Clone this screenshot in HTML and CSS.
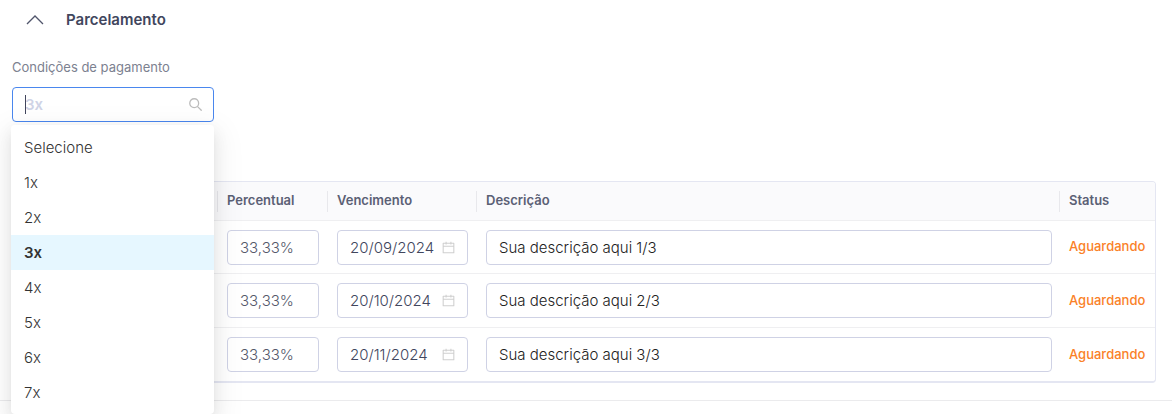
FILE: index.html
```html
<!DOCTYPE html>
<html lang="pt-BR">
<head>
<meta charset="utf-8">
<meta name="viewport" content="width=device-width, initial-scale=1">
<title>Parcelamento</title>
<link rel="stylesheet" href="styles.css">
</head>
<body>
<svg class="sprite" aria-hidden="true">
  <symbol id="calendar" viewBox="0 0 1024 1024">
    <path d="M880 184H712v-64c0-4.400-3.600-8-8-8h-56c-4.400 0-8 3.600-8 8v64H384v-64c0-4.400-3.600-8-8-8h-56c-4.400 0-8 3.600-8 8v64H144c-17.700 0-32 14.300-32 32v664c0 17.700 14.300 32 32 32h736c17.700 0 32-14.300 32-32V216c0-17.700-14.300-32-32-32zm-40 656H184V460h656v380zM184 392V256h128v48c0 4.400 3.600 8 8 8h56c4.400 0 8-3.600 8-8v-48h256v48c0 4.400 3.600 8 8 8h56c4.400 0 8-3.600 8-8v-48h128v136H184z"/>
  </symbol>
</svg>
<section class="panel">
  <h2 class="panel-header">
    <button class="panel-toggle" type="button" aria-expanded="true">
      <svg class="chevron" viewBox="0 0 18 10" aria-hidden="true"><path d="M1 9 9 1l8 8"/></svg>
      Parcelamento
    </button>
  </h2>
  <div class="panel-body">
    <div class="field">
      <label class="field-label" for="condition">Condições de pagamento</label>
      <div class="select">
        <input class="select-input" id="condition" type="text" role="combobox" aria-expanded="true" aria-controls="options" placeholder="3x" autocomplete="off">
        <span class="caret"></span>
        <svg class="search" viewBox="0 0 12 12" aria-hidden="true"><circle cx="4.800" cy="4.800" r="4.100"/><path d="m7.700 7.700 4 4"/></svg>
        <ul class="menu" id="options" role="listbox">
          <li class="option" role="option">Selecione</li>
          <li class="option" role="option">1x</li>
          <li class="option" role="option">2x</li>
          <li class="option selected" role="option" aria-selected="true">3x</li>
          <li class="option" role="option">4x</li>
          <li class="option" role="option">5x</li>
          <li class="option" role="option">6x</li>
          <li class="option" role="option">7x</li>
        </ul>
      </div>
    </div>
    <div class="table-frame">
      <table class="table">
        <colgroup><col class="col-first"><col class="col-percent"><col class="col-date"><col><col class="col-status"></colgroup>
        <thead>
          <tr><th></th><th>Percentual</th><th>Vencimento</th><th>Descrição</th><th>Status</th></tr>
        </thead>
        <tbody>
          <tr>
            <td></td>
            <td><input class="input muted" type="text" value="33,33%" aria-label="Percentual"></td>
            <td><div class="date"><input class="input" type="text" value="20/09/2024" aria-label="Vencimento"><svg class="calendar" aria-hidden="true"><use href="#calendar"/></svg></div></td>
            <td class="description"><input class="input dark" type="text" value="Sua descrição aqui 1/3" aria-label="Descrição"></td>
            <td class="status">Aguardando</td>
          </tr>
          <tr>
            <td></td>
            <td><input class="input muted" type="text" value="33,33%" aria-label="Percentual"></td>
            <td><div class="date"><input class="input" type="text" value="20/10/2024" aria-label="Vencimento"><svg class="calendar" aria-hidden="true"><use href="#calendar"/></svg></div></td>
            <td class="description"><input class="input dark" type="text" value="Sua descrição aqui 2/3" aria-label="Descrição"></td>
            <td class="status">Aguardando</td>
          </tr>
          <tr>
            <td></td>
            <td><input class="input muted" type="text" value="33,33%" aria-label="Percentual"></td>
            <td><div class="date"><input class="input" type="text" value="20/11/2024" aria-label="Vencimento"><svg class="calendar" aria-hidden="true"><use href="#calendar"/></svg></div></td>
            <td class="description"><input class="input dark" type="text" value="Sua descrição aqui 3/3" aria-label="Descrição"></td>
            <td class="status">Aguardando</td>
          </tr>
        </tbody>
      </table>
    </div>
  </div>
</section>
</body>
</html>
```
FILE: styles.css
```css
* { box-sizing: border-box; }
body {
  margin: 0;
  min-height: 100vh;
  background: #fff;
  color: #41465d;
  font-family: Inter, "Liberation Sans", sans-serif;
  font-size: 15px;
  font-optical-sizing: none;
}
input, button { font: inherit; font-optical-sizing: none; color: inherit; }
.sprite { position: absolute; width: 0; height: 0; }

.panel { border-bottom: 1px solid #ebebed; }
.panel-header { margin: 0; font-size: 15px; }
.panel-toggle {
  display: flex;
  align-items: center;
  gap: 22px;
  width: 100%;
  height: 40px;
  padding: 0 26px;
  border: 0;
  background: none;
  font-weight: 600;
  line-height: 20px;
}
.chevron {
  width: 18px;
  height: 10px;
  fill: none;
  stroke: #50556b;
  stroke-width: 1.3;
}
.panel-body { padding: 17px 16px 17px 12px; }

.field { width: 202px; }
.field-label {
  display: block;
  margin-bottom: 10px;
  font-size: 13px;
  line-height: 20px;
  color: #7c8190;
}
.select { position: relative; }
.select-input {
  display: block;
  width: 100%;
  height: 35px;
  padding: 0 30px 0 12px;
  border: 1px solid #4a87ee;
  border-radius: 4px;
  background: #fff;
  outline: 0;
}
.select-input::placeholder { color: #cfd3e6; opacity: 1; font-weight: 600; }
.caret {
  position: absolute;
  top: 8px;
  left: 13px;
  width: 1px;
  height: 19px;
  background: #41465d;
}
.search {
  position: absolute;
  top: 11px;
  right: 12px;
  width: 13px;
  height: 13px;
  fill: none;
  stroke: #bcbcbc;
  stroke-width: 1.2;
}
.menu {
  position: absolute;
  z-index: 2;
  top: 38px;
  left: -1px;
  right: 0;
  margin: 0;
  padding: 5px 0 4px;
  list-style: none;
  border-radius: 4px;
  background: #fff;
  box-shadow: 0 3px 6px -4px rgba(0, 0, 0, .12), 0 6px 16px rgba(0, 0, 0, .08), 0 9px 28px 8px rgba(0, 0, 0, .05);
  color: #333;
}
.option {
  height: 35px;
  padding: 0 13px;
  line-height: 35px;
  font-weight: 300;
}
.selected { background: #e6f7ff; font-weight: 600; }

.table-frame {
  margin-top: 59px;
  border: 1px solid #e4e6f2;
  border-bottom-width: 2px;
  border-radius: 4px;
  overflow: hidden;
}
.table {
  width: 100%;
  table-layout: fixed;
  border-collapse: separate;
  border-spacing: 0;
}
.col-first { width: 205px; }
.col-percent { width: 110px; }
.col-date { width: 149px; }
.col-status { width: 95px; }
th, td { padding: 0 9px; border-bottom: 1px solid #efeff1; text-align: left; }
.description { padding-right: 8px; }
th {
  position: relative;
  height: 39px;
  padding-bottom: 2px;
  background: #fafafc;
  font-size: 13px;
  font-weight: 600;
  color: #5b6075;
}
th:not(:last-child)::after {
  content: "";
  position: absolute;
  top: 9px;
  right: 0;
  width: 1px;
  height: 21px;
  background: #e8e8ec;
}
td { height: 54px; }
tbody tr:first-child td { height: 53px; }
tbody tr:last-child td { height: 53px; border-bottom: 0; }
.input {
  display: block;
  width: 100%;
  height: 35px;
  padding: 0 12px;
  border: 1px solid #cfd2e5;
  border-radius: 4px;
  background: #fff;
  font-weight: 300;
}
.muted { color: #54586a; }
.dark { color: #222; }
.date { position: relative; }
.calendar {
  position: absolute;
  top: 10px;
  right: 12px;
  width: 15px;
  height: 15px;
  fill: #cfcfcf;
}
.status { padding: 0 0 2px 9px; font-size: 13px; font-weight: 500; color: #fa8128; }
```
